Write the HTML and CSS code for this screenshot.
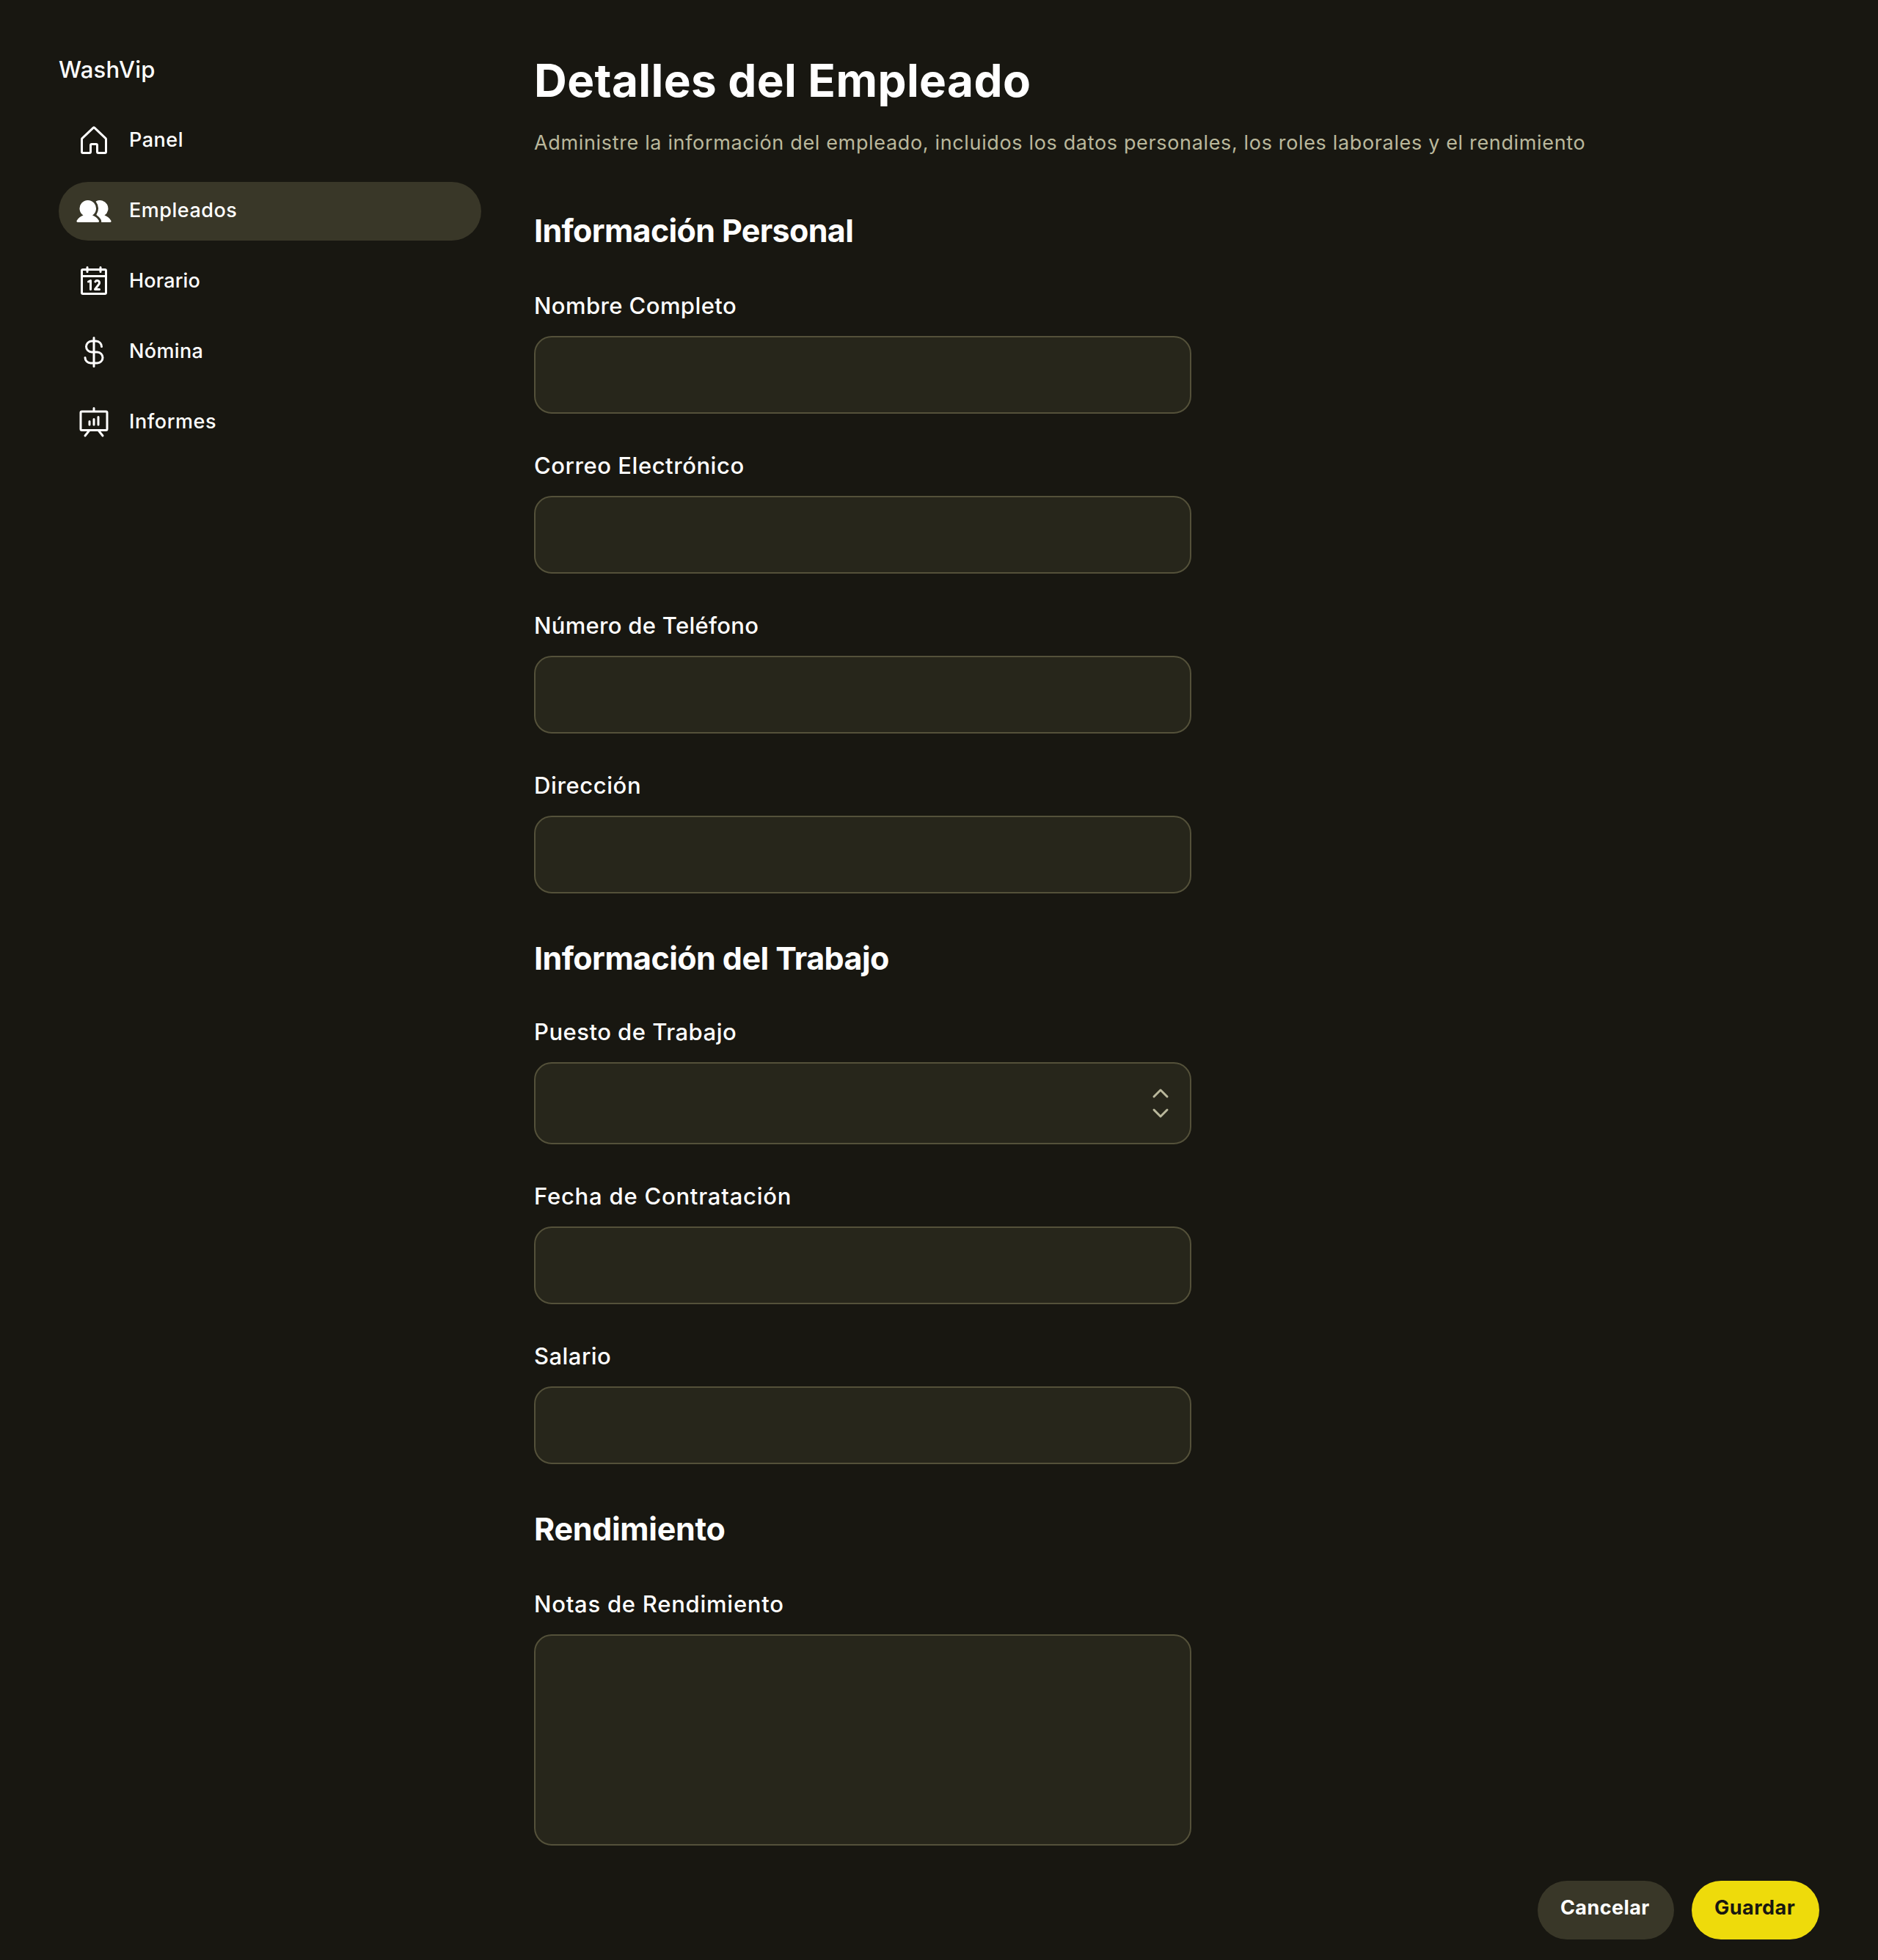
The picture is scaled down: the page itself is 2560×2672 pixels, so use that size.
FILE: index.html
```html
<!DOCTYPE html>
<html lang="es">
<head>
<meta charset="utf-8">
<title>WashVip – Detalles del Empleado</title>
<link rel="stylesheet" href="styles.css">
</head>
<body>
<div class="page">
  <aside class="sidebar">
    <p class="brand">WashVip</p>
    <nav class="nav">
      <a class="nav-item">
        <svg class="icon" viewBox="0 0 256 256"><path d="M218.83,103.77l-80-75.48a1.14,1.14,0,0,1-.11-.11,16,16,0,0,0-21.53,0l-.11.11L37.17,103.77A16,16,0,0,0,32,115.55V208a16,16,0,0,0,16,16H96a16,16,0,0,0,16-16V160h32v48a16,16,0,0,0,16,16h48a16,16,0,0,0,16-16V115.55A16,16,0,0,0,218.83,103.77ZM208,208H160V160a16,16,0,0,0-16-16H112a16,16,0,0,0-16,16v48H48V115.55l.11-.1L128,40l79.9,75.43.11.1Z"/></svg>
        <span class="nav-text track-panel">Panel</span>
      </a>
      <a class="nav-item active">
        <svg class="icon" viewBox="0 0 256 256"><path d="M164.47,195.63a8,8,0,0,1-6.7,12.37H10.23a8,8,0,0,1-6.7-12.37,95.83,95.83,0,0,1,47.22-37.71,60,60,0,1,1,66.5,0A95.83,95.83,0,0,1,164.47,195.63Zm87.91-.15a95.87,95.87,0,0,0-47.13-37.56A60,60,0,0,0,144.7,54.59a4,4,0,0,0-1.33,6A75.83,75.83,0,0,1,147,150.53a4,4,0,0,0,1.07,5.53,112.32,112.32,0,0,1,29.85,30.83,23.92,23.92,0,0,1,3.65,16.47,4,4,0,0,0,3.95,4.64h60.3a8,8,0,0,0,7.73-5.93A8.22,8.22,0,0,0,252.38,195.48Z"/></svg>
        <span class="nav-text track-empleados">Empleados</span>
      </a>
      <a class="nav-item">
        <svg class="icon" viewBox="0 0 256 256"><path d="M208,32H184V24a8,8,0,0,0-16,0v8H88V24a8,8,0,0,0-16,0v8H48A16,16,0,0,0,32,48V208a16,16,0,0,0,16,16H208a16,16,0,0,0,16-16V48A16,16,0,0,0,208,32ZM72,48v8a8,8,0,0,0,16,0V48h80v8a8,8,0,0,0,16,0V48h24V80H48V48ZM208,208H48V96H208V208Zm-96-88v64a8,8,0,0,1-16,0V132.94l-4.42,2.22a8,8,0,0,1-7.16-14.32l16-8A8,8,0,0,1,112,120Zm59.16,30.45L152,176h16a8,8,0,0,1,0,16H136a8,8,0,0,1-6.4-12.8l28.78-38.37A8,8,0,1,0,145.07,132a8,8,0,1,1-13.85-8A24,24,0,0,1,176,136,23.76,23.76,0,0,1,171.16,150.45Z"/></svg>
        <span class="nav-text track-horario">Horario</span>
      </a>
      <a class="nav-item">
        <svg class="icon" viewBox="0 0 256 256"><path d="M152,120H136V56h8a32,32,0,0,1,32,32,8,8,0,0,0,16,0,48.05,48.05,0,0,0-48-48h-8V24a8,8,0,0,0-16,0V40h-8a48,48,0,0,0,0,96h8v64H104a32,32,0,0,1-32-32,8,8,0,0,0-16,0,48.05,48.05,0,0,0,48,48h16v16a8,8,0,0,0,16,0V216h16a48,48,0,0,0,0-96Zm-40,0a32,32,0,0,1,0-64h8v64Zm40,80H136V136h16a32,32,0,0,1,0,64Z"/></svg>
        <span class="nav-text track-nomina">Nómina</span>
      </a>
      <a class="nav-item">
        <svg class="icon" viewBox="0 0 256 256"><path d="M216,40H136V24a8,8,0,0,0-16,0V40H40A16,16,0,0,0,24,56V176a16,16,0,0,0,16,16H79.36L57.75,219a8,8,0,0,0,12.5,10l29.59-37h56.32l29.59,37a8,8,0,1,0,12.5-10l-21.61-27H216a16,16,0,0,0,16-16V56A16,16,0,0,0,216,40Zm0,136H40V56H216V176ZM104,120v24a8,8,0,0,1-16,0V120a8,8,0,0,1,16,0Zm32-16v40a8,8,0,0,1-16,0V104a8,8,0,0,1,16,0Zm32-16v56a8,8,0,0,1-16,0V88a8,8,0,0,1,16,0Z"/></svg>
        <span class="nav-text track-informes">Informes</span>
      </a>
    </nav>
  </aside>

  <main class="content">
    <header class="header">
      <h1 class="title">Detalles del Empleado</h1>
      <p class="subtitle">Administre la información del empleado, incluidos los datos personales, los roles laborales y el rendimiento</p>
    </header>

    <section class="section">
      <h2 class="section-title track-personal">Información Personal</h2>
      <label class="field"><span class="label track-nombre">Nombre Completo</span><input class="control" type="text"></label>
      <label class="field"><span class="label track-correo">Correo Electrónico</span><input class="control" type="text"></label>
      <label class="field"><span class="label track-telefono">Número de Teléfono</span><input class="control" type="text"></label>
      <label class="field"><span class="label track-direccion">Dirección</span><input class="control" type="text"></label>
    </section>

    <section class="section">
      <h2 class="section-title compact track-trabajo">Información del Trabajo</h2>
      <div class="field">
        <span class="label track-puesto">Puesto de Trabajo</span>
        <div class="control select">
          <svg class="icon caret" viewBox="0 0 256 256"><path d="M181.66,170.34a8,8,0,0,1,0,11.32l-48,48a8,8,0,0,1-11.32,0l-48-48a8,8,0,0,1,11.32-11.32L128,212.69l42.34-42.35A8,8,0,0,1,181.66,170.34Zm-96-84.68L128,43.31l42.34,42.35a8,8,0,0,0,11.32-11.32l-48-48a8,8,0,0,0-11.32,0l-48,48A8,8,0,0,0,85.66,85.66Z"/></svg>
        </div>
      </div>
      <label class="field"><span class="label track-fecha">Fecha de Contratación</span><input class="control" type="text"></label>
      <label class="field"><span class="label track-salario">Salario</span><input class="control" type="text"></label>
    </section>

    <section class="section">
      <h2 class="section-title track-rendimiento">Rendimiento</h2>
      <label class="field"><span class="label track-notas">Notas de Rendimiento</span><textarea class="control notes"></textarea></label>
    </section>

    <div class="actions">
      <button class="button secondary">Cancelar</button>
      <button class="button primary">Guardar</button>
    </div>
  </main>
</div>
</body>
</html>
```
FILE: styles.css
```css
* { box-sizing: border-box; }

body {
  margin: 0;
  background: #181711;
  color: #fff;
  font-family: Inter, "Liberation Sans", sans-serif;
}

h1, h2, p { margin: 0; }

.page {
  display: flex;
  gap: 72px;
  min-height: 2672px;
  padding: 0 80px;
}

/* Sidebar */
.sidebar {
  width: 576px;
  flex-shrink: 0;
  padding-top: 71px;
}

.brand {
  font-size: 31px;
  font-weight: 500;
  line-height: 48px;
  letter-spacing: 0.28px;
  margin-bottom: 33px;
}

.nav {
  display: flex;
  flex-direction: column;
  gap: 16px;
}

.nav-item {
  display: flex;
  align-items: center;
  gap: 24px;
  height: 80px;
  padding: 0 24px;
  border-radius: 40px;
}

.nav-item.active { background: #393728; }

.nav-text {
  font-size: 27px;
  font-weight: 500;
  line-height: 42px;
  padding-bottom: 2px;
}

.icon {
  display: block;
  width: 48px;
  height: 48px;
  fill: currentColor;
}

/* Main column */
.content {
  flex: 1;
  padding-top: 70px;
}

.header { padding-bottom: 34px; }

.title {
  font-size: 62px;
  font-weight: 700;
  line-height: 80px;
  letter-spacing: 0.4px;
  margin-bottom: 24px;
}

.subtitle {
  font-size: 27px;
  line-height: 42px;
  letter-spacing: 0.652px;
  color: #bab89c;
  white-space: nowrap;
}

.section-title {
  font-size: 43px;
  font-weight: 700;
  line-height: 56px;
  padding: 36px 0 28px;
}

.section-title.compact { padding-bottom: 26px; }

.field {
  display: flex;
  flex-direction: column;
  width: 896px;
  padding: 24px 0;
}

.label {
  font-size: 31px;
  font-weight: 500;
  line-height: 46px;
  padding-bottom: 18px;
}

.control {
  display: block;
  width: 100%;
  height: 106px;
  margin: 0;
  padding: 0 30px;
  border: 2px solid #54513a;
  border-radius: 24px;
  background: #27261b;
  color: #fff;
  font: inherit;
  font-size: 31px;
  outline: none;
  resize: none;
}

.control.notes { height: 288px; }

.control.select {
  display: flex;
  align-items: center;
  justify-content: flex-end;
  height: 112px;
  padding: 0 16px;
}

.caret { color: #bab89c; }

.actions {
  display: flex;
  justify-content: flex-end;
  gap: 24px;
  padding: 24px 0 28px;
}

.button {
  height: 80px;
  border: 0;
  border-radius: 40px;
  padding: 0 31px 6px;
  font-family: inherit;
  font-size: 27px;
  font-weight: 700;
  line-height: 42px;
  text-align: left;
}

.secondary {
  width: 186px;
  background: #393728;
  color: #fff;
  letter-spacing: 0.4px;
}

.primary {
  width: 174px;
  background: #eedb0b;
  color: #181711;
  letter-spacing: 0.5px;
}

/* Per-label tracking */
.track-panel { letter-spacing: 0.5px; }
.track-empleados { letter-spacing: 0.51px; }
.track-horario { letter-spacing: 0.15px; }
.track-nomina { letter-spacing: 0.35px; }
.track-informes { letter-spacing: 0.55px; }
.track-personal { letter-spacing: -0.65px; }
.track-trabajo { letter-spacing: -0.57px; }
.track-rendimiento { letter-spacing: -0.3px; }
.track-nombre { letter-spacing: 0.41px; }
.track-correo { letter-spacing: 0.55px; }
.track-telefono { letter-spacing: 0.3px; }
.track-direccion { letter-spacing: 0.6px; }
.track-puesto { letter-spacing: 0.49px; }
.track-fecha { letter-spacing: 0.78px; }
.track-salario { letter-spacing: 0.46px; }
.track-notas { letter-spacing: 0.75px; }
```
